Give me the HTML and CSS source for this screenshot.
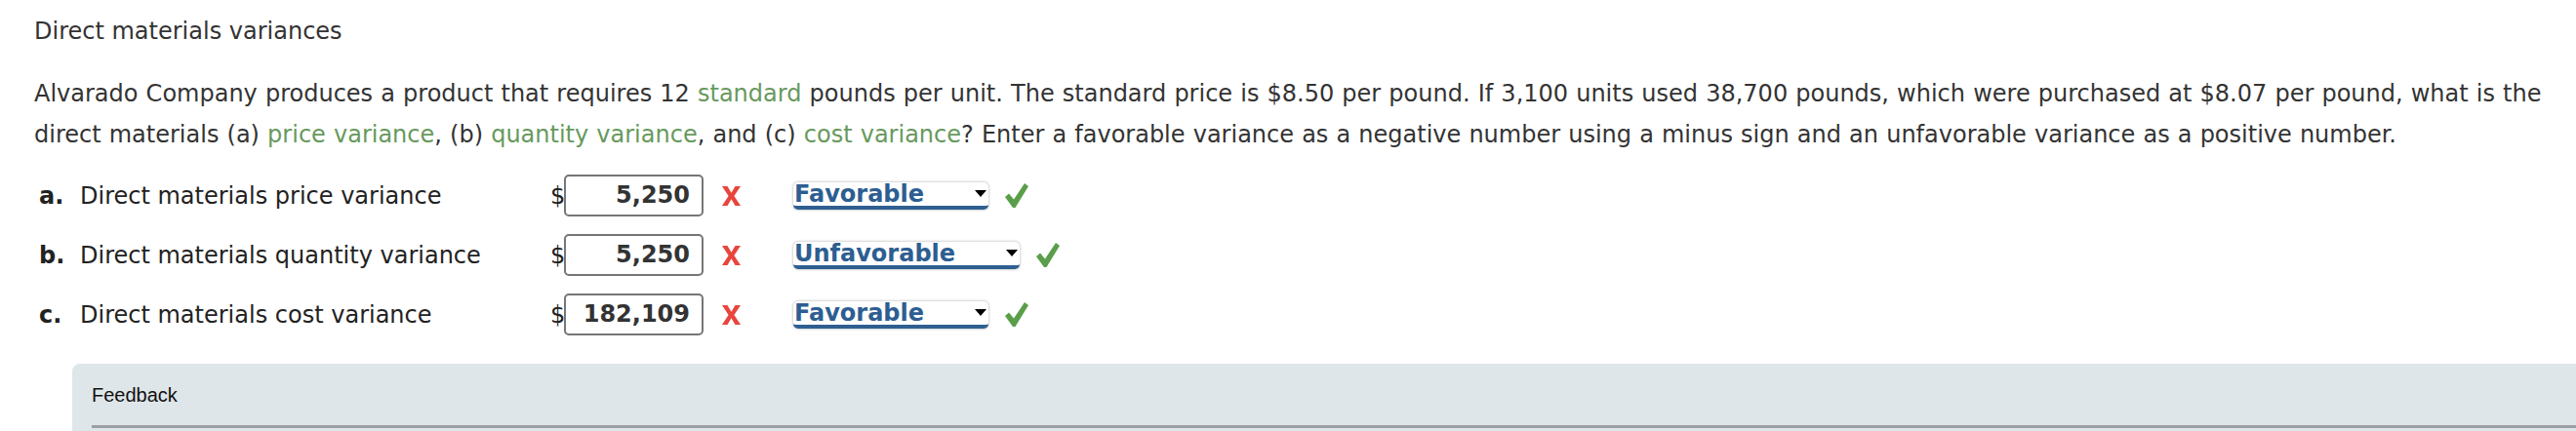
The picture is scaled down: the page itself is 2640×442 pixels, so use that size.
FILE: index.html
```html
<!DOCTYPE html>
<html>
<head>
<meta charset="utf-8">
<link rel="stylesheet" href="styles.css">
</head>
<body>
<div class="page">
  <h1 class="title">Direct materials variances</h1>
  <p class="question">Alvarado Company produces a product that requires 12 <span class="term">standard</span> pounds per unit. The standard price is $8.50 per pound. If 3,100 units used 38,700 pounds, which were purchased at $8.07 per pound, what is the direct materials (a) <span class="term">price variance</span>, (b) <span class="term">quantity variance</span>, and (c) <span class="term">cost variance</span>? Enter a favorable variance as a negative number using a minus sign and an unfavorable variance as a positive number.</p>

  <div class="rows">
    <div class="row">
      <div class="label"><b class="letter">a.</b><span>Direct materials price variance</span></div>
      <span class="dollar">$</span>
      <div class="input">5,250</div>
      <svg class="wrong" viewBox="0 0 19 20" width="19" height="20"><path d="M0 0 H5.5 L9.5 6.8 L13.5 0 H19 L12.4 10 L19 20 H13.5 L9.5 13.2 L5.5 20 H0 L6.6 10 Z" fill="#e8453c"/></svg>
      <div class="select"><span>Favorable</span><svg class="caret" viewBox="0 0 12 7" width="12" height="7"><path d="M0 0 H12 L6 7 Z" fill="#000"/></svg></div>
      <svg class="right" viewBox="0 0 24 25" width="24" height="25"><path d="M0 14 L4 10.5 L9 16.5 L20 0 L24 3 L10.5 25 L8 25 Z" fill="#5a9e4a"/></svg>
    </div>
    <div class="row">
      <div class="label"><b class="letter">b.</b><span>Direct materials quantity variance</span></div>
      <span class="dollar">$</span>
      <div class="input">5,250</div>
      <svg class="wrong" viewBox="0 0 19 20" width="19" height="20"><path d="M0 0 H5.5 L9.5 6.8 L13.5 0 H19 L12.4 10 L19 20 H13.5 L9.5 13.2 L5.5 20 H0 L6.6 10 Z" fill="#e8453c"/></svg>
      <div class="select"><span>Unfavorable</span><svg class="caret" viewBox="0 0 12 7" width="12" height="7"><path d="M0 0 H12 L6 7 Z" fill="#000"/></svg></div>
      <svg class="right" viewBox="0 0 24 25" width="24" height="25"><path d="M0 14 L4 10.5 L9 16.5 L20 0 L24 3 L10.5 25 L8 25 Z" fill="#5a9e4a"/></svg>
    </div>
    <div class="row">
      <div class="label"><b class="letter">c.</b><span>Direct materials cost variance</span></div>
      <span class="dollar">$</span>
      <div class="input">182,109</div>
      <svg class="wrong" viewBox="0 0 19 20" width="19" height="20"><path d="M0 0 H5.5 L9.5 6.8 L13.5 0 H19 L12.4 10 L19 20 H13.5 L9.5 13.2 L5.5 20 H0 L6.6 10 Z" fill="#e8453c"/></svg>
      <div class="select"><span>Favorable</span><svg class="caret" viewBox="0 0 12 7" width="12" height="7"><path d="M0 0 H12 L6 7 Z" fill="#000"/></svg></div>
      <svg class="right" viewBox="0 0 24 25" width="24" height="25"><path d="M0 14 L4 10.5 L9 16.5 L20 0 L24 3 L10.5 25 L8 25 Z" fill="#5a9e4a"/></svg>
    </div>
  </div>

  <div class="feedback">
    <div class="feedback-title">Feedback</div>
    <div class="feedback-rule"></div>
  </div>
</div>
</body>
</html>
```

FILE: styles.css
```css
html, body {
  margin: 0;
  padding: 0;
  background: #fff;
}
body {
  width: 2640px;
  height: 442px;
  overflow: hidden;
  font-family: "DejaVu Sans", Verdana, sans-serif;
  color: #333;
}
.page {
  padding: 17px 0 0 35px;
}
.title {
  margin: 0;
  font-size: 24px;
  font-weight: normal;
  line-height: 30px;
  color: #333;
}
.question {
  margin: 28px 0 0 0;
  font-size: 24px;
  line-height: 42px;
  word-spacing: 0.5px;
  width: 2600px;
}
.term {
  color: #67995d;
}
.rows {
  margin-top: 20px;
  padding-left: 5px;
  display: flex;
  flex-direction: column;
  gap: 18px;
}
.row {
  display: flex;
  align-items: center;
  height: 43px;
}
.label {
  width: 524px;
  display: flex;
  font-size: 24px;
  color: #222;
}
.letter {
  width: 42px;
}
.dollar {
  font-size: 24px;
  color: #222;
  width: 14px;
}
.input {
  box-sizing: border-box;
  width: 143px;
  height: 43px;
  border: 2px solid #767676;
  border-radius: 5px;
  font-size: 24px;
  font-weight: bold;
  color: #333;
  text-align: right;
  padding-right: 12px;
  line-height: 39px;
}
.wrong {
  margin-left: 19px;
}
.select {
  margin-left: 54px;
  display: flex;
  align-items: center;
  height: 28px;
  box-sizing: border-box;
  background: #fff;
  border-radius: 5px;
  border-bottom: 4px solid #2f5f90;
  box-shadow: 0 0 3px rgba(0,0,0,0.35);
  font-size: 24px;
  font-weight: bold;
  color: #2d5e91;
  padding: 0 2px 0 1px;
  line-height: 24px;
}
.caret {
  margin-left: 52px;
}
.right {
  margin-left: 17px;
}
.feedback {
  margin: 29px 0 0 39px;
  background: #dfe6ea;
  border-top-left-radius: 8px;
  padding: 21px 0 0 20px;
  height: 60px;
}
.feedback-title {
  font-family: "Liberation Sans", Arial, sans-serif;
  font-size: 20px;
  line-height: 23px;
  color: #111;
}
.feedback-rule {
  margin-top: 19px;
  height: 3px;
  background: #9aa0a4;
}
```
